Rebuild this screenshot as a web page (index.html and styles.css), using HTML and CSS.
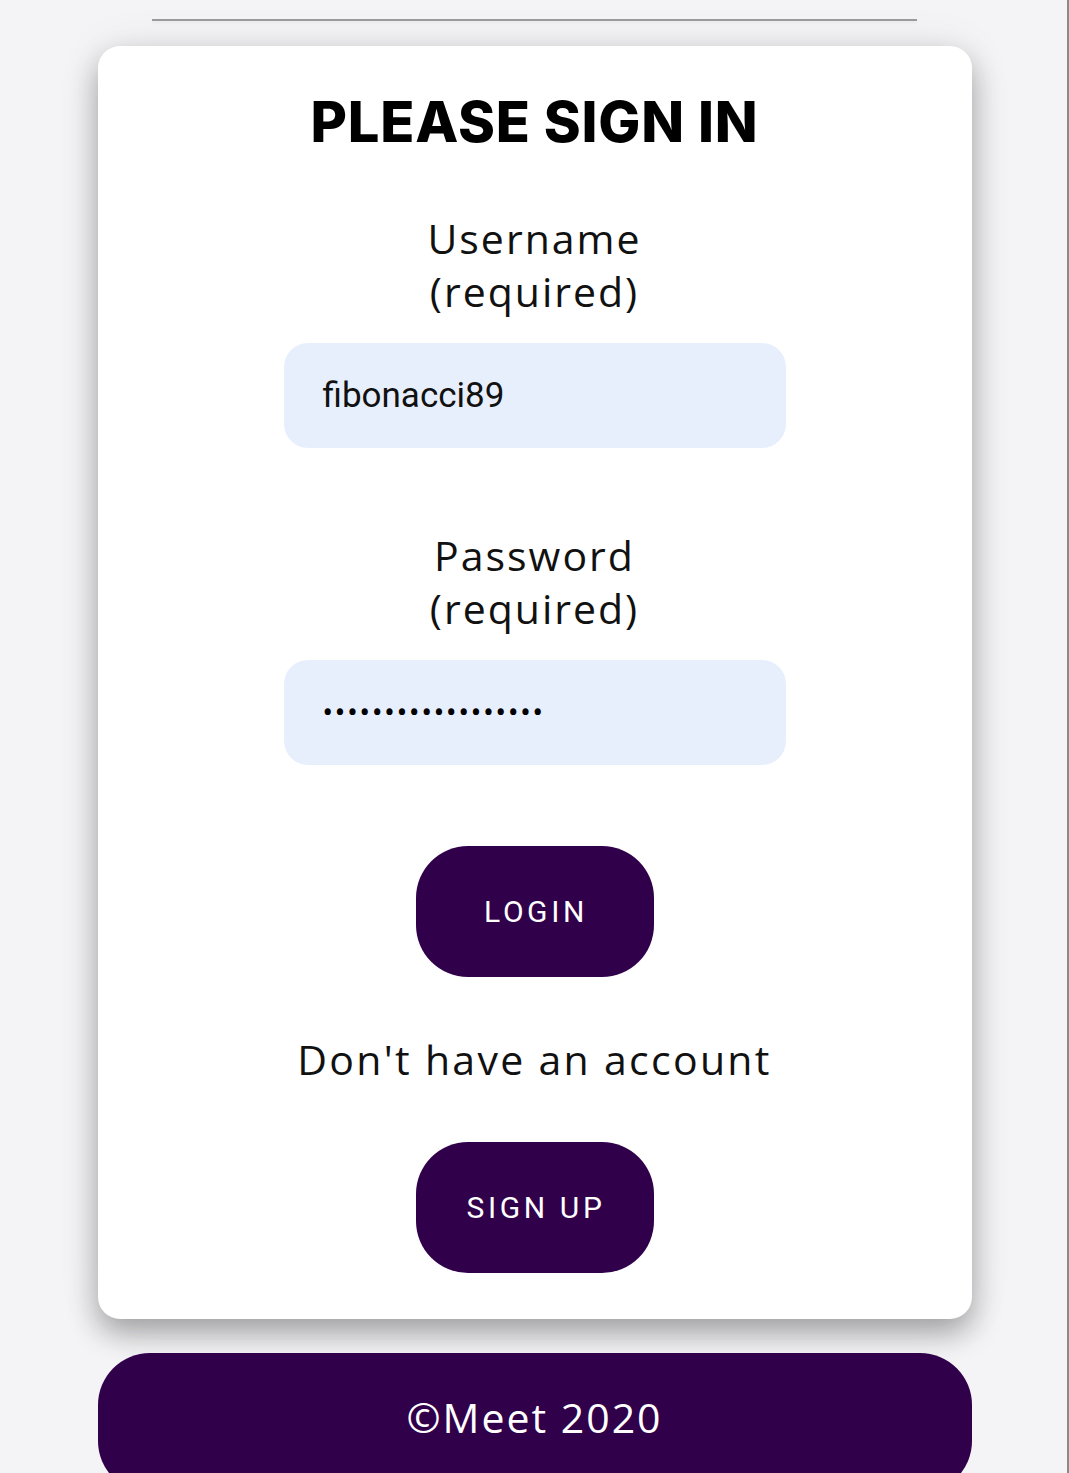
FILE: index.html
```html
<!DOCTYPE html>
<html>
<head>
<meta charset="utf-8">
<link rel="stylesheet" href="styles.css">
</head>
<body>
<div class="frame">
  <div class="topline"></div>
  <form class="card">
    <h1 class="title">PLEASE SIGN IN</h1>
    <label class="label">Username<br>(required)</label>
    <div class="field"><span class="value">fibonacci89</span></div>
    <label class="label label-gap">Password<br>(required)</label>
    <div class="field"><span class="dots">••••••••••••••••••</span></div>
    <button type="button" class="btn btn-login">LOGIN</button>
    <p class="note">Don't have an account</p>
    <button type="button" class="btn btn-signup">SIGN UP</button>
  </form>
  <footer class="footer">©Meet 2020</footer>
</div>
</body>
</html>
```
FILE: styles.css
```css
html, body {
  margin: 0;
  padding: 0;
  background: #f4f4f6;
  height: 1473px;
  overflow: hidden;
}
.frame {
  width: 1069px;
  height: 1473px;
  box-sizing: border-box;
  padding-left: 2px;
  border-right: 2px solid #8a8a8a;
  display: flex;
  flex-direction: column;
  align-items: center;
}
.frame > * {
  flex: none;
}
.topline {
  width: 765px;
  height: 2px;
  background: #9c9c9c;
  margin-top: 19px;
  margin-left: -1px;
  box-shadow: 0 2px 3px rgba(0,0,0,0.05);
}
.card {
  margin-top: 25px;
  width: 874px;
  box-sizing: border-box;
  background: #fff;
  border-radius: 22px;
  box-shadow: 0 14px 30px rgba(0,0,0,0.33), 0 0 50px rgba(0,0,0,0.06);
  display: flex;
  flex-direction: column;
  align-items: center;
  padding: 32px 0 46px;
}
.card > * {
  flex: none;
}
.title {
  margin: 0;
  font-family: Inter, "Liberation Sans", sans-serif;
  font-weight: 800;
  font-size: 56px;
  line-height: 88px;
  color: #000;
  letter-spacing: 0.8px;
}
.label {
  display: block;
  margin-top: 46px;
  font-family: "Open Sans", sans-serif;
  font-weight: 400;
  font-size: 41px;
  letter-spacing: 2px;
  line-height: 53px;
  text-align: center;
  color: #111;
}
.label-gap {
  margin-top: 81px;
}
.field {
  margin-top: 25px;
  width: 502px;
  height: 105px;
  box-sizing: border-box;
  background: #e8effc;
  border-radius: 24px;
  display: flex;
  align-items: center;
  padding-left: 39px;
}
.value {
  font-family: Roboto, sans-serif;
  font-size: 35px;
  color: #111;
}
.dots {
  font-family: Roboto, sans-serif;
  font-size: 31px;
  letter-spacing: 1.9px;
  color: #000;
}
.btn {
  width: 238px;
  height: 131px;
  border: 0;
  border-radius: 52px;
  background: #31004b;
  color: #fff;
  font-family: Roboto, sans-serif;
  font-weight: 400;
  font-size: 30px;
  letter-spacing: 3.6px;
  padding: 0 0 0 3px;
}
.btn-login {
  margin-top: 81px;
}
.note {
  margin: 56px 0 0;
  font-family: "Open Sans", sans-serif;
  font-size: 41px;
  letter-spacing: 2.3px;
  line-height: 53px;
  color: #111;
}
.btn-signup {
  margin-top: 56px;
}
.footer {
  margin-top: 34px;
  width: 874px;
  height: 140px;
  box-sizing: border-box;
  padding-top: 35px;
  background: #31004b;
  border-radius: 52px;
  color: #fff;
  text-align: center;
  font-family: "Open Sans", sans-serif;
  font-size: 41px;
  letter-spacing: 2px;
  line-height: 58px;
}
```
